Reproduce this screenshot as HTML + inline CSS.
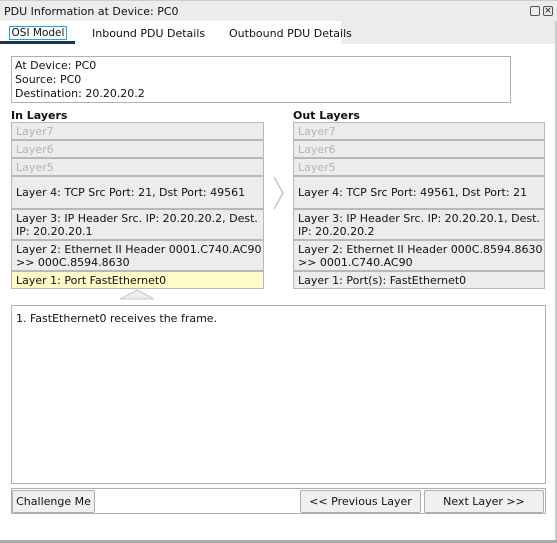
<!DOCTYPE html><html><head><style>
body{margin:0;width:557px;height:543px;background:#fff;font-family:"DejaVu Sans","Liberation Sans",sans-serif;font-size:11px;color:#111;position:relative;overflow:hidden}
.a{position:absolute;box-sizing:border-box;white-space:nowrap}
.l{position:absolute;box-sizing:border-box;background:#ececec;border:1px solid #b8b8b8;padding:1px 4px;line-height:13px;display:flex;align-items:center;white-space:nowrap}
.g{color:#b4b4b4}
.btn{position:absolute;box-sizing:border-box;background:#f0f0f0;border:1px solid #b0b0b0;border-radius:2px;text-align:center;line-height:21px;white-space:nowrap}
</style></head><body>
<div class="a" style="left:0;top:0;width:557px;height:21px;background:#ececec;border-top:1px solid #ccc"></div>
<div class="a" style="left:4px;top:5px">PDU Information at Device: PC0</div>
<div class="a" style="left:530px;top:6px;width:10px;height:10px;border:1px solid #555;border-radius:2px"></div>
<div class="a" style="left:543px;top:6px;width:10px;height:10px;border:1px solid #555;border-radius:2px;font-size:9px;line-height:8px;text-align:center">×</div>
<div class="a" style="left:341px;top:21px;width:216px;height:23px;background:#ececec"></div>
<div class="a" style="left:555px;top:21px;width:2px;height:522px;background:#ccc"></div>
<div class="a" style="left:9px;top:26px;width:58px;height:14px;border:1px solid #2aa0d8;text-align:center;line-height:12px;font-size:10.5px">OSI Model</div>
<div class="a" style="left:0;top:41px;width:75px;height:3px;background:#1b3350"></div>
<div class="a" style="left:92px;top:27px">Inbound PDU Details</div>
<div class="a" style="left:229px;top:27px">Outbound PDU Details</div>
<div class="a" style="left:11px;top:56px;width:500px;height:47px;border:1px solid #b0b0b0;padding:2px 3px;line-height:14px">At Device: PC0<br>Source: PC0<br>Destination: 20.20.20.2</div>
<div class="a" style="left:11px;top:109px;font-weight:bold">In Layers</div>
<div class="a" style="left:293px;top:109px;font-weight:bold">Out Layers</div>
<div class="l g" style="left:11px;top:122px;width:253px;height:18px">Layer7</div>
<div class="l g" style="left:11px;top:140px;width:253px;height:18px">Layer6</div>
<div class="l g" style="left:11px;top:158px;width:253px;height:18px">Layer5</div>
<div class="l" style="left:11px;top:176px;width:253px;height:33px">Layer 4: TCP Src Port: 21, Dst Port: 49561</div>
<div class="l" style="left:11px;top:209px;width:253px;height:31px">Layer 3: IP Header Src. IP: 20.20.20.2, Dest.<br>IP: 20.20.20.1</div>
<div class="l" style="left:11px;top:240px;width:253px;height:31px">Layer 2: Ethernet II Header 0001.C740.AC90<br>&gt;&gt; 000C.8594.8630</div>
<div class="l" style="left:11px;top:271px;width:253px;height:18px;background:#fffbc8">Layer 1: Port FastEthernet0</div>
<div class="l g" style="left:293px;top:122px;width:252px;height:18px">Layer7</div>
<div class="l g" style="left:293px;top:140px;width:252px;height:18px">Layer6</div>
<div class="l g" style="left:293px;top:158px;width:252px;height:18px">Layer5</div>
<div class="l" style="left:293px;top:176px;width:252px;height:33px">Layer 4: TCP Src Port: 49561, Dst Port: 21</div>
<div class="l" style="left:293px;top:209px;width:252px;height:31px">Layer 3: IP Header Src. IP: 20.20.20.1, Dest.<br>IP: 20.20.20.2</div>
<div class="l" style="left:293px;top:240px;width:252px;height:31px">Layer 2: Ethernet II Header 000C.8594.8630<br>&gt;&gt; 0001.C740.AC90</div>
<div class="l" style="left:293px;top:271px;width:252px;height:18px">Layer 1: Port(s): FastEthernet0</div>
<svg class="a" style="left:272px;top:176px" width="14" height="34"><polyline points="2,1 11,17 2,33" fill="none" stroke="#c8c8c8" stroke-width="1.5"/></svg>
<svg class="a" style="left:119px;top:289px" width="36" height="11"><polygon points="1,10 18,1 35,10" fill="#eee" stroke="#c8c8c8"/></svg>
<div class="a" style="left:11px;top:305px;width:535px;height:179px;border:1px solid #b0b0b0;padding:6px 4px">1. FastEthernet0 receives the frame.</div>
<div class="a" style="left:11px;top:488px;width:535px;height:26px;border:1px solid #b0b0b0"></div>
<div class="btn" style="left:12px;top:490px;width:83px;height:23px">Challenge Me</div>
<div class="btn" style="left:300px;top:490px;width:121px;height:23px">&lt;&lt; Previous Layer</div>
<div class="btn" style="left:424px;top:490px;width:120px;height:23px">Next Layer &gt;&gt;</div>
<div class="a" style="left:0;top:540px;width:557px;height:3px;background:#aaa"></div>
</body></html>
